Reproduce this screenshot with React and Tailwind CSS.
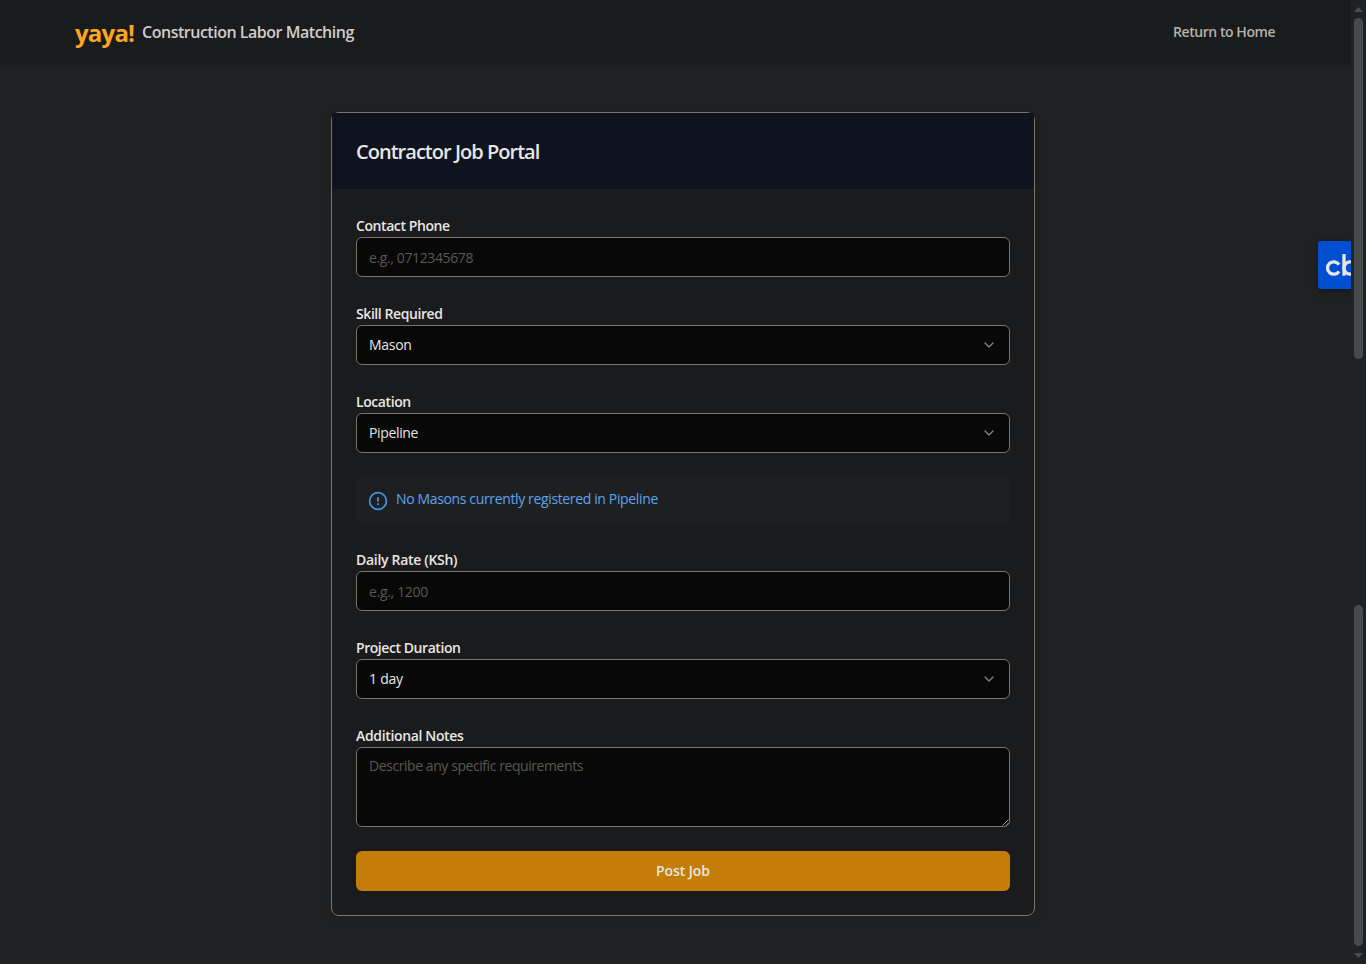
import React from 'react';
import { ChevronDown } from 'lucide-react';

const control =
  'block w-full rounded-md border border-[#7d7263] bg-[#080808] px-3 text-[14px] text-[#e8e6e3] outline-none placeholder:text-[#595853]';

function Field({ label, tracking, children }) {
  return (
    <div>
      <div className={`h-6 whitespace-nowrap text-[14px] font-semibold leading-[26px] text-[#e8e6e3] ${tracking}`}>{label}</div>
      {children}
    </div>
  );
}

function SelectBox({ value, tracking }) {
  return (
    <button type="button" className={`${control} flex h-10 items-center justify-between`}>
      <span className={`pb-0.5 ${tracking}`}>{value}</span>
      <ChevronDown className="h-4 w-4 text-[#85827d]" strokeWidth={2} />
    </button>
  );
}

function ScrollPane({ top, bottom }) {
  return (
    <div className="flex w-[15px] flex-1 flex-col bg-[#1e2223] pl-[3px]">
      <div className="flex h-[18px] w-[9px] shrink-0 items-center">
        {top && (
          <svg width="9" height="5" viewBox="0 0 9 5">
            <path d="M0 5L4.5 0L9 5Z" fill="#484d4f" />
          </svg>
        )}
      </div>
      {top ? <div className="h-[341px] w-[9px] rounded-full bg-[#454a4c]" /> : null}
      {bottom ? (
        <>
          <div className="mt-auto h-[341px] w-[9px] shrink-0 rounded-full bg-[#454a4c]" />
          <div className="flex h-[18px] w-[9px] shrink-0 items-center">
            <svg width="9" height="5" viewBox="0 0 9 5">
              <path d="M0 0L4.5 5L9 0Z" fill="#484d4f" />
            </svg>
          </div>
        </>
      ) : null}
    </div>
  );
}

export default function App() {
  return (
    <div className="relative h-[964px] w-full overflow-hidden bg-[#202123] font-['Open_Sans','Noto_Sans',sans-serif] text-[#e8e6e3]">
      <header className="flex h-16 items-center bg-[#1a1b1d] pl-[75px] pr-[91px] shadow-[0_1px_3px_rgba(0,0,0,0.15)]">
        <span className="mt-0.5 w-[60px] whitespace-nowrap text-[24px] font-bold leading-8 tracking-[-0.8px] text-[#fba522]">yaya!</span>
        <span className="ml-[7px] whitespace-nowrap text-[16px] font-semibold leading-6 tracking-[-0.48px] text-[#d0cdc8]">Construction Labor Matching</span>
        <a className="ml-auto whitespace-nowrap text-[14px] font-semibold leading-5 tracking-[-0.45px] text-[#b5b1aa]">Return to Home</a>
      </header>

      <main className="flex justify-center pt-12">
        <section className="w-[704px] rounded-lg border border-[#7d7263] bg-[#1a1b1d] shadow-[0_4px_8px_rgba(0,0,0,0.1)]">
          <div className="flex h-[76px] items-center bg-[#0f131f] px-6">
            <h1 className="mt-0.5 whitespace-nowrap text-[20px] font-semibold leading-7 tracking-[-0.97px]">Contractor Job Portal</h1>
          </div>
          <form className="flex flex-col gap-6 p-6">
            <Field label="Contact Phone" tracking="tracking-[-0.42px]">
              <input className={`${control} h-10 tracking-[-0.38px]`} placeholder="e.g., 0712345678" />
            </Field>
            <Field label="Skill Required" tracking="tracking-[-0.42px]">
              <SelectBox value="Mason" tracking="tracking-[-0.3px]" />
            </Field>
            <Field label="Location" tracking="tracking-[-0.42px]">
              <SelectBox value="Pipeline" tracking="tracking-[-0.35px]" />
            </Field>
            <div className="flex h-[46px] items-start rounded-md bg-[#1e1f21] pl-3 pt-3">
              <svg width="20" height="20" viewBox="0 0 20 20" fill="none" stroke="#3f94ea" className="mt-0.5">
                <circle cx="10" cy="10" r="8.4" strokeWidth="1.7" />
                <path d="M10 6.2V10.6M10 12.2V14" strokeWidth="1.8" />
              </svg>
              <span className="ml-2 whitespace-nowrap text-[14px] leading-5 tracking-[-0.36px] text-[#5ea3f0]">No Masons currently registered in Pipeline</span>
            </div>
            <Field label="Daily Rate (KSh)" tracking="tracking-[-0.3px]">
              <input className={`${control} h-10 tracking-[-0.32px]`} placeholder="e.g., 1200" />
            </Field>
            <Field label="Project Duration" tracking="tracking-[-0.44px]">
              <SelectBox value="1 day" tracking="tracking-[-0.25px]" />
            </Field>
            <Field label="Additional Notes" tracking="tracking-[-0.35px]">
              <div className="relative">
                <textarea className={`${control} h-20 resize-none py-2 leading-5 tracking-[-0.43px]`} placeholder="Describe any specific requirements" />
                <svg width="7" height="7" viewBox="0 0 7 7" className="absolute bottom-[1px] right-[1px]" stroke="#b9b7b3" strokeWidth="0.9">
                  <path d="M0.5 6.5L6.5 0.5M4 6.5L6.5 4" />
                </svg>
              </div>
            </Field>
            <button type="button" className="h-10 rounded-md bg-[#c47d08] pb-0.5 text-[14px] font-semibold tracking-[-0.1px] text-[#e8e6e3]">Post Job</button>
          </form>
        </section>
      </main>

      <div className="absolute right-[15px] top-[241px] h-12 w-[33px] overflow-hidden rounded-l-[3px] bg-[#004fd2] shadow-[0_2px_6px_rgba(0,0,0,0.4)]">
        <svg width="33" height="48" viewBox="0 0 33 48" fill="none" stroke="#e8e6e3" strokeWidth="3.3">
          <path d="M21 23.7A6.2 6.2 0 1 0 21 30.3" />
          <path d="M26 13V34.8" />
          <circle cx="32.2" cy="27" r="6.2" />
        </svg>
      </div>

      <div className="absolute inset-y-0 right-0 flex flex-col">
        <ScrollPane top />
        <ScrollPane bottom />
      </div>
    </div>
  );
}
